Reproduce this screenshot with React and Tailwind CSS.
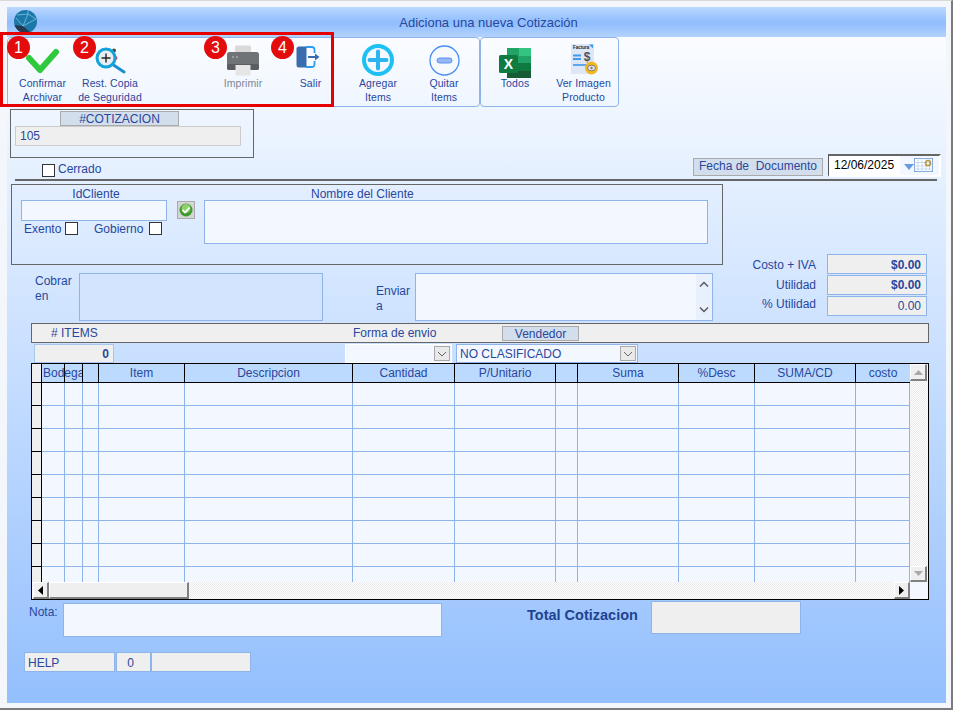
import React from "react";

const F = "font-['Liberation_Sans',Arial,sans-serif]";
const TXT = "text-[#28479d]";

const CheckIcon = () => (
  <svg width="36" height="28" viewBox="0 0 36 28" className="mt-[9px]">
    <polyline points="4,11 15,23 31,5" fill="none" stroke="#2fc93e" strokeWidth="6" strokeLinecap="round" strokeLinejoin="round" />
  </svg>
);
const MagnifierIcon = () => (
  <svg width="32" height="28" viewBox="0 0 32 28" className="mt-[9px]">
    <circle cx="20" cy="3.5" r="2" fill="#4a4a4a" />
    <circle cx="21.5" cy="11" r="2" fill="#e0455a" />
    <line x1="18" y1="17" x2="30" y2="25" stroke="#1b8fd0" strokeWidth="3" strokeLinecap="round" />
    <circle cx="12" cy="11" r="9" fill="#e8eef2" stroke="#12a3dc" strokeWidth="3" />
    <path d="M7.5 11h9M12 6.5v9" stroke="#222" strokeWidth="1.4" />
  </svg>
);
const PrinterIcon = () => (
  <svg width="34" height="31" viewBox="0 0 34 31" className="mt-[7px]">
    <rect x="9" y="0.5" width="16" height="9" rx="1.5" fill="#d9d9d9" />
    <rect x="1" y="7" width="32" height="18" rx="2.5" fill="#6f7376" />
    <rect x="1" y="19" width="32" height="6" rx="2" fill="#5b5e61" />
    <circle cx="7" cy="12" r="1.2" fill="#9a9da0" />
    <circle cx="11" cy="12" r="1.2" fill="#9a9da0" />
    <rect x="9.5" y="20" width="15" height="10.5" fill="#e6e6e6" />
  </svg>
);
const ExitIcon = () => (
  <svg width="24" height="22" viewBox="0 0 24 22" className="mt-[8px] ml-[-6px]">
    <path d="M3 0.5h7.5v21H3a2.5 2.5 0 0 1-2.5-2.5V3A2.5 2.5 0 0 1 3 0.5z" fill="#3a6cae" />
    <path d="M10 1h6a2.5 2.5 0 0 1 2.5 2.5V7M18.500 15v3.500a2.500 2.500 0 0 1-2.500 2.500h-6" fill="none" stroke="#2a9cf2" strokeWidth="1.8" />
    <path d="M12 11h8" stroke="#3a6cae" strokeWidth="2" />
    <path d="M19 7.500l4.500 3.500-4.500 3.500z" fill="#3a6cae" />
  </svg>
);
const PlusIcon = () => (
  <svg width="32" height="32" viewBox="0 0 32 32" className="mt-[6px]">
    <circle cx="16" cy="16" r="14" fill="#f4f9ff" stroke="#1ec0f4" strokeWidth="4" />
    <path d="M7.500 16h17M16 7.500v17" stroke="#2cb4ee" strokeWidth="4" strokeLinecap="round" />
  </svg>
);
const MinusIcon = () => (
  <svg width="31" height="31" viewBox="0 0 31 31" className="mt-[7px]">
    <circle cx="15.500" cy="15.500" r="14.500" fill="#f6faff" stroke="#4b8ef5" strokeWidth="1.300" />
    <rect x="8" y="13" width="15" height="5" rx="2.500" fill="#96b6f4" stroke="#5d8ff0" />
  </svg>
);
const ExcelIcon = () => (
  <svg width="32" height="30" viewBox="0 0 32 30" className="mt-[10px]">
    <rect x="8" y="0" width="24" height="30" rx="1.500" fill="#21a366" />
    <rect x="20" y="0" width="12" height="8" fill="#33c481" />
    <rect x="8" y="0" width="12" height="8" fill="#21a366" />
    <rect x="20" y="8" width="12" height="7" fill="#21a366" />
    <rect x="8" y="15" width="24" height="8" fill="#107c41" />
    <rect x="20" y="15" width="12" height="8" fill="#0f7a40" />
    <rect x="8" y="23" width="24" height="7" fill="#185c37" />
    <rect x="0" y="7" width="19" height="18" rx="1.500" fill="#0f7b41" />
    <text x="9.500" y="21" textAnchor="middle" fontSize="14" fontWeight="700" fill="#fff" fontFamily="Liberation Sans">X</text>
  </svg>
);
const InvoiceIcon = () => (
  <svg width="28" height="32" viewBox="0 0 28 32" className="mt-[6px] ml-[2px]">
    <rect x="0" y="0" width="23" height="30" fill="#dfe7f6" />
    <text x="2" y="4.500" fontSize="4.500" fontWeight="700" fill="#222" fontFamily="Liberation Sans">Factura</text>
    <path d="M18 0.500l4 0v4z" fill="#2e9af0" />
    <path d="M2 11.500h8M2 15h8" stroke="#3b9bf0" strokeWidth="1.800" />
    <text x="16" y="17" textAnchor="middle" fontSize="12" fontWeight="700" fill="#44536a" fontFamily="Liberation Sans">$</text>
    <path d="M2 21h14" stroke="#5aa6f2" strokeWidth="2" />
    <circle cx="20.500" cy="24" r="6.500" fill="#f4b71d" />
    <ellipse cx="20.500" cy="24" rx="4" ry="2.800" fill="#e6e6e6" stroke="#7d7d7d" strokeWidth="1" />
    <circle cx="20.500" cy="24" r="1.200" fill="#7d7d7d" />
  </svg>
);

const Globe = () => (
  <svg width="23" height="23" viewBox="0 0 23 23" className="ml-[7px] mt-[3px] shrink-0">
    <defs>
      <clipPath id="g"><circle cx="11.500" cy="11.500" r="11.500" /></clipPath>
    </defs>
    <circle cx="11.500" cy="11.500" r="11.500" fill="#1c78a8" />
    <g clipPath="url(#g)">
      <path d="M0 15 L9 16 L17 23 L0 23z" fill="#25384e" />
      <path d="M3 5 L14 4 L22 9 M14 4 L9 16 L22 9 M9 16 L2 8 M14 0 L14 4" stroke="#7ec3e0" strokeWidth="0.800" fill="none" />
    </g>
  </svg>
);

const ToolButton = ({ w, icon, lines, muted }) => (
  <div className={`${w} h-full flex flex-col items-center shrink-0`}>
    <div className="h-[38px] flex items-start justify-center">{icon}</div>
    <div className={`text-[10.5px] leading-[14px] tracking-[0.1px] text-center whitespace-nowrap ${muted ? "text-[#7d8597]" : TXT}`}>
      {lines.map((l) => (
        <div key={l}>{l}</div>
      ))}
    </div>
  </div>
);

const Check = ({ className = "" }) => <div className={`w-[13px] h-[13px] bg-white border border-[#333] shrink-0 ${className}`} />;

const Chevron = ({ up }) => (
  <svg width="10" height="7" viewBox="0 0 10 7">
    <path d={up ? "M1 5.500L5 1.500l4 4" : "M1 1.500l4 4 4-4"} fill="none" stroke="#555" strokeWidth="1.400" />
  </svg>
);

const SelectArrow = () => (
  <div className="w-[16px] h-[15px] bg-[#e9e9e9] border border-[#a9a9a9] flex items-center justify-center shrink-0">
    <svg width="10" height="6" viewBox="0 0 10 6"><path d="M1 1l4 4 4-4" fill="none" stroke="#666" strokeWidth="1" /></svg>
  </div>
);

const Tri = ({ dir, color = "#000" }) => {
  const d = { left: "M5 0v9L0 4.500z", right: "M0 0v9l5-4.500z", up: "M0 5h9L4.500 0z", down: "M0 0h9L4.500 5z" }[dir];
  const vertical = dir === "up" || dir === "down";
  return (
    <svg width={vertical ? 9 : 5} height={vertical ? 5 : 9} viewBox={vertical ? "0 0 9 5" : "0 0 5 9"}>
      <path d={d} fill={color} />
    </svg>
  );
};

const SB = "bg-[#efefef] border-t border-l border-t-white border-l-white border-r-2 border-b-2 border-r-[#808080] border-b-[#808080] flex items-center justify-center shrink-0";

const cols = "grid grid-cols-[10px_23px_18px_16px_86px_168px_102px_101px_22px_101px_76px_101px_54px]";
const heads = ["", "", "", "Item", "Descripcion", "Cantidad", "P/Unitario", "", "Suma", "%Desc", "SUMA/CD", "costo"];

const Stat = ({ label, value, bold, labelClass, valueClass }) => (
  <div className="flex h-[20px]">
    <div className={`w-[93px] text-right text-[12px] ${labelClass} ${TXT}`}>{label}</div>
    <div className={`ml-[11px] w-[100px] h-[20px] bg-[#efefef] border border-[#8fb4ea] text-right pr-[5px] text-[12px] ${valueClass} ${TXT} ${bold ? "font-bold" : ""}`}>
      {value}
    </div>
  </div>
);

export default function App() {
  return (
    <div className={`${F} relative w-[953px] h-[710px] overflow-hidden bg-[#f3f7fb] border-t border-t-[#d8d8d8] border-r-2 border-r-[#7b7b7b] border-b-2 border-b-[#7b7b7b] pl-[7px] pt-[6px] text-[12px]`}>
      <div className="w-[939px] h-[696px] flex flex-col bg-linear-to-b from-white to-[#93bffd] overflow-hidden">
        {/* Title bar */}
        <div className="h-[30px] flex shrink-0 bg-[linear-gradient(#bad8fe_0%,#93c0fd_45%,#93c0fd_60%,#b4d3fe_100%)]">
          <Globe />
          <div className={`flex-1 text-center pr-[6px] text-[13px] leading-[32px] ${TXT}`}>Adiciona una nueva Cotización</div>
        </div>

        {/* Toolbar */}
        <div className="h-[70px] flex shrink-0">
          <div className="w-[473px] h-full border border-[#8fb4ea] rounded-[4px] flex pl-[1px]">
            <ToolButton w="w-[67px]" icon={<CheckIcon />} lines={["Confirmar", "Archivar"]} />
            <ToolButton w="w-[68px]" icon={<MagnifierIcon />} lines={["Rest. Copia", "de Seguridad"]} />
            <div className="w-[65px] shrink-0" />
            <ToolButton w="w-[68px]" icon={<PrinterIcon />} lines={["Imprimir"]} muted />
            <ToolButton w="w-[67px]" icon={<ExitIcon />} lines={["Salir"]} />
            <ToolButton w="w-[68px]" icon={<PlusIcon />} lines={["Agregar", "Items"]} />
            <ToolButton w="w-[64px]" icon={<MinusIcon />} lines={["Quitar", "Items"]} />
          </div>
          <div className="w-[139px] h-full border border-[#8fb4ea] rounded-[4px] flex">
            <ToolButton w="w-[68px]" icon={<ExcelIcon />} lines={["Todos"]} />
            <ToolButton w="w-[69px]" icon={<InvoiceIcon />} lines={["Ver Imagen", "Producto"]} />
          </div>
        </div>

        {/* Cotizacion + date */}
        <div className="flex items-end justify-between shrink-0 mt-[2px] pl-[3px] pr-[5px]">
          <div className="flex flex-col">
            <div className="w-[244px] h-[49px] border border-[#666] flex flex-col pl-[4px]">
              <div className={`ml-[45px] mt-[1px] w-[119px] h-[15px] bg-[#d3deec] border border-[#aaa] text-center leading-[14px] ${TXT}`}>#COTIZACION</div>
              <div className={`w-[226px] h-[20px] bg-[#efefef] border border-[#ccc] pl-[4px] leading-[19px] ${TXT}`}>105</div>
            </div>
            <div className="flex h-[13px] mt-[6px] mb-[2px] ml-[32px]">
              <Check />
              <span className={`ml-[3px] leading-[11px] ${TXT}`}>Cerrado</span>
            </div>
          </div>
          <div className="flex items-end mb-[2px]">
            <div className={`w-[130px] h-[18px] mb-[1px] bg-[#d3deec] border border-[#aaa] whitespace-pre text-center leading-[14px] ${TXT}`}>Fecha de  Documento</div>
            <div className="ml-[5px] w-[113px] h-[23px] flex items-center bg-[#f3f7ff] border-t-2 border-l border-t-[#666] border-l-[#555] border-r-2 border-b-2 border-r-white border-b-white">
              <div className="w-[71px] h-full bg-white pl-[5px] leading-[19px] text-black">12/06/2025</div>
              <svg width="10" height="6" viewBox="0 0 10 6" className="ml-[4px] mt-[3px]"><path d="M0 0h10L5 6z" fill="#6a9be0" /></svg>
              <svg width="19" height="14" viewBox="0 0 19 14" className="mt-[-2px]">
                <rect x="0.500" y="0.500" width="18" height="13" fill="#fff" stroke="#7ba4e0" />
                <path d="M0 4.500h19M0 8h19M0 11h19M4 0v14M8 0v14M12 0v14M15.500 0v14" stroke="#bcd0ee" strokeWidth="0.800" />
                <circle cx="14" cy="5" r="2.500" fill="none" stroke="#b8994a" strokeWidth="1.700" />
              </svg>
            </div>
          </div>
        </div>

        {/* rule */}
        <div className="ml-[8px] w-[922px] h-[2px] bg-[#666] shrink-0" />

        {/* Client + totals */}
        <div className="flex shrink-0">
          <div className="w-[716px] pl-[4px] shrink-0">
            <div className="mt-[3px] w-[712px] h-[81px] border border-[#666] flex">
              <div className="ml-[9px] w-[146px] flex flex-col">
                <div className={`h-[15px] leading-[19px] text-center pl-[4px] ${TXT}`}>IdCliente</div>
                <div className="h-[21px] bg-[#f3f7ff] border border-[#8fb4ea]" />
                <div className={`flex items-center h-[13px] mt-[1px] ml-[3px] ${TXT}`}>
                  <span className="w-[41px]">Exento</span>
                  <Check />
                  <span className="ml-[16px] w-[55px]">Gobierno</span>
                  <Check />
                </div>
              </div>
              <div className="ml-[10px] mt-[16px] w-[18px] h-[18px] bg-[#d4d6d4] border border-[#aaa] flex items-center justify-center">
                <svg width="14" height="14" viewBox="0 0 14 14">
                  <circle cx="7" cy="7" r="6.500" fill="#3f9a2e" />
                  <circle cx="7" cy="5.500" r="4.500" fill="#8ed06e" />
                  <path d="M3.500 7l2.500 2.500 4.500-5" fill="none" stroke="#fff" strokeWidth="1.800" />
                </svg>
              </div>
              <div className="ml-[9px] w-[504px] flex flex-col">
                <div className={`h-[15px] leading-[19px] pl-[107px] ${TXT}`}>Nombre del Cliente</div>
                <div className="h-[44px] bg-[#f3f7ff] border border-[#8fb4ea]" />
              </div>
            </div>

            <div className="mt-[8px] flex h-[48px]">
              <div className={`ml-[24px] w-[44px] pt-[1px] leading-[15px] ${TXT}`}>Cobrar<br />en</div>
              <div className="w-[244px] h-[48px] border border-[#8fb4ea] bg-[#d3e4fe]" />
              <div className={`ml-[53px] w-[39px] pt-[11px] leading-[15px] ${TXT}`}>Enviar<br />a</div>
              <div className="w-[298px] h-[48px] border border-[#8fb4ea] bg-[#f3f7ff] flex justify-end">
                <div className="w-[16px] h-full bg-[#e8f0fd] flex flex-col items-center justify-between py-[7px]">
                  <Chevron up />
                  <Chevron />
                </div>
              </div>
            </div>
          </div>
          <div className="mt-[73px] flex flex-col gap-[1px]">
            <Stat label="Costo + IVA" value="$0.00" bold labelClass="leading-[22px]" valueClass="leading-[20px]" />
            <Stat label="Utilidad" value="$0.00" bold labelClass="leading-[20px]" valueClass="leading-[19px]" />
            <Stat label="% Utilidad" value="0.00" labelClass="leading-[16px]" valueClass="leading-[19px]" />
          </div>
        </div>

        {/* strip */}
        <div className={`mt-[2px] ml-[24px] w-[898px] h-[20px] bg-[#efefef] border border-[#666] flex items-center shrink-0 ${TXT}`}>
          <span className="ml-[19px] w-[302px]"># ITEMS</span>
          <span className="w-[149px]">Forma de envio</span>
          <div className="w-[77px] h-[15px] bg-[#d3deec] border border-[#aaa] text-center leading-[14px]">Vendedor</div>
        </div>

        {/* selects */}
        <div className="flex mt-[1px] ml-[27px] h-[19px] shrink-0">
          <div className={`w-[80px] h-[19px] bg-[#efefef] border border-[#a9c6f0] text-right pr-[4px] font-bold leading-[19px] ${TXT}`}>0</div>
          <div className="ml-[231px] w-[107px] h-[19px] bg-[#f3f7ff] border border-[#fff] flex items-center justify-end pr-[1px]">
            <SelectArrow />
          </div>
          <div className={`ml-[4px] w-[182px] h-[19px] bg-[#f3f7ff] border border-[#8fb4ea] flex items-center justify-between pl-[3px] pr-[1px] ${TXT}`}>
            <span>NO CLASIFICADO</span>
            <SelectArrow />
          </div>
        </div>

        {/* grid */}
        <div className="ml-[24px] w-[898px] h-[237px] border border-black flex flex-col shrink-0 bg-[#f3f7ff]">
          <div className="flex h-[218px]">
            <div className="w-[878px] h-full overflow-hidden shrink-0">
              <div className={`${cols} h-[19px] bg-[#bcdafe] text-[12px] ${TXT}`}>
                <div className="h-[19px] bg-[#efefef] border-r border-b border-black" />
                <div className="h-[19px] border-r border-b border-black pl-[1px] leading-[19px]">
                  <span className="relative block w-[39px] overflow-hidden whitespace-nowrap">Bodega</span>
                </div>
                {heads.slice(1).map((h, i) => (
                  <div key={i} className={`h-[19px] border-b border-black text-center leading-[19px] ${i === heads.length - 2 ? "" : "border-r"}`}>
                    {h}
                  </div>
                ))}
              </div>
              {Array.from({ length: 9 }).map((_, r) => (
                <div key={r} className={`${cols} h-[23px]`}>
                  <div className="bg-[#efefef] border-r border-b border-r-black border-b-black" />
                  {Array.from({ length: 12 }).map((_, c) => (
                    <div key={c} className="bg-[#f3f7ff] border-r border-b border-[#8fb4ea]" />
                  ))}
                </div>
              ))}
            </div>
            <div className="w-[17px] h-full flex flex-col justify-between bg-[repeating-conic-gradient(#e9e9e9_0%_25%,#ffffff_0%_50%)] bg-[length:2px_2px]">
              <div className={`${SB} h-[17px]`}><Tri dir="up" color="#a8a8a8" /></div>
              <div className={`${SB} h-[16px]`}><Tri dir="down" color="#a8a8a8" /></div>
            </div>
          </div>
          <div className="flex h-[17px]">
            <div className={`${SB} ml-[1px] w-[16px] h-[17px]`}><Tri dir="left" /></div>
            <div className={`${SB} w-[140px] h-[17px]`} />
            <div className="w-[705px] h-[17px] bg-[repeating-conic-gradient(#e9e9e9_0%_25%,#ffffff_0%_50%)] bg-[length:2px_2px]" />
            <div className={`${SB} w-[16px] h-[17px]`}><Tri dir="right" /></div>
          </div>
        </div>

        {/* notes */}
        <div className="flex h-[37px] shrink-0">
          <div className={`ml-[22px] w-[34px] mt-[3px] ${TXT}`}>Nota:</div>
          <div className="mt-[3px] w-[379px] h-[34px] bg-[#f3f7ff] border border-[#8fb4ea]" />
          <div className="ml-[85px] w-[124px] mt-[5px] text-[14.5px] font-bold whitespace-nowrap text-[#1f4391]">Total Cotizacion</div>
          <div className="mt-[1px] w-[150px] h-[33px] bg-[#efefef] border border-[#8fb4ea]" />
        </div>

        {/* status */}
        <div className={`mt-[15px] ml-[17px] flex h-[20px] shrink-0 ${TXT}`}>
          <div className="w-[91px] bg-[#efefef] border border-[#8fb4ea] pl-[3px] leading-[20px]">HELP</div>
          <div className="ml-[1px] w-[35px] bg-[#efefef] border border-[#8fb4ea] text-center pr-[6px] leading-[20px]">0</div>
          <div className="w-[100px] bg-[#efefef] border border-[#8fb4ea]" />
        </div>
      </div>

      {/* Annotation overlay */}
      <div className="absolute left-0 top-[31px] w-[334px] h-[75px] border-[3px] border-[#e60000] pointer-events-none" />
      {[
        ["1", "left-[7px]"],
        ["2", "left-[73px]"],
        ["3", "left-[204px]"],
        ["4", "left-[271px]"],
      ].map(([n, pos]) => (
        <div key={n} className={`absolute top-[35px] ${pos} w-[23px] h-[23px] rounded-full bg-[#e30b0b] text-white text-[16px] leading-[23px] text-center`}>
          {n}
        </div>
      ))}
    </div>
  );
}
